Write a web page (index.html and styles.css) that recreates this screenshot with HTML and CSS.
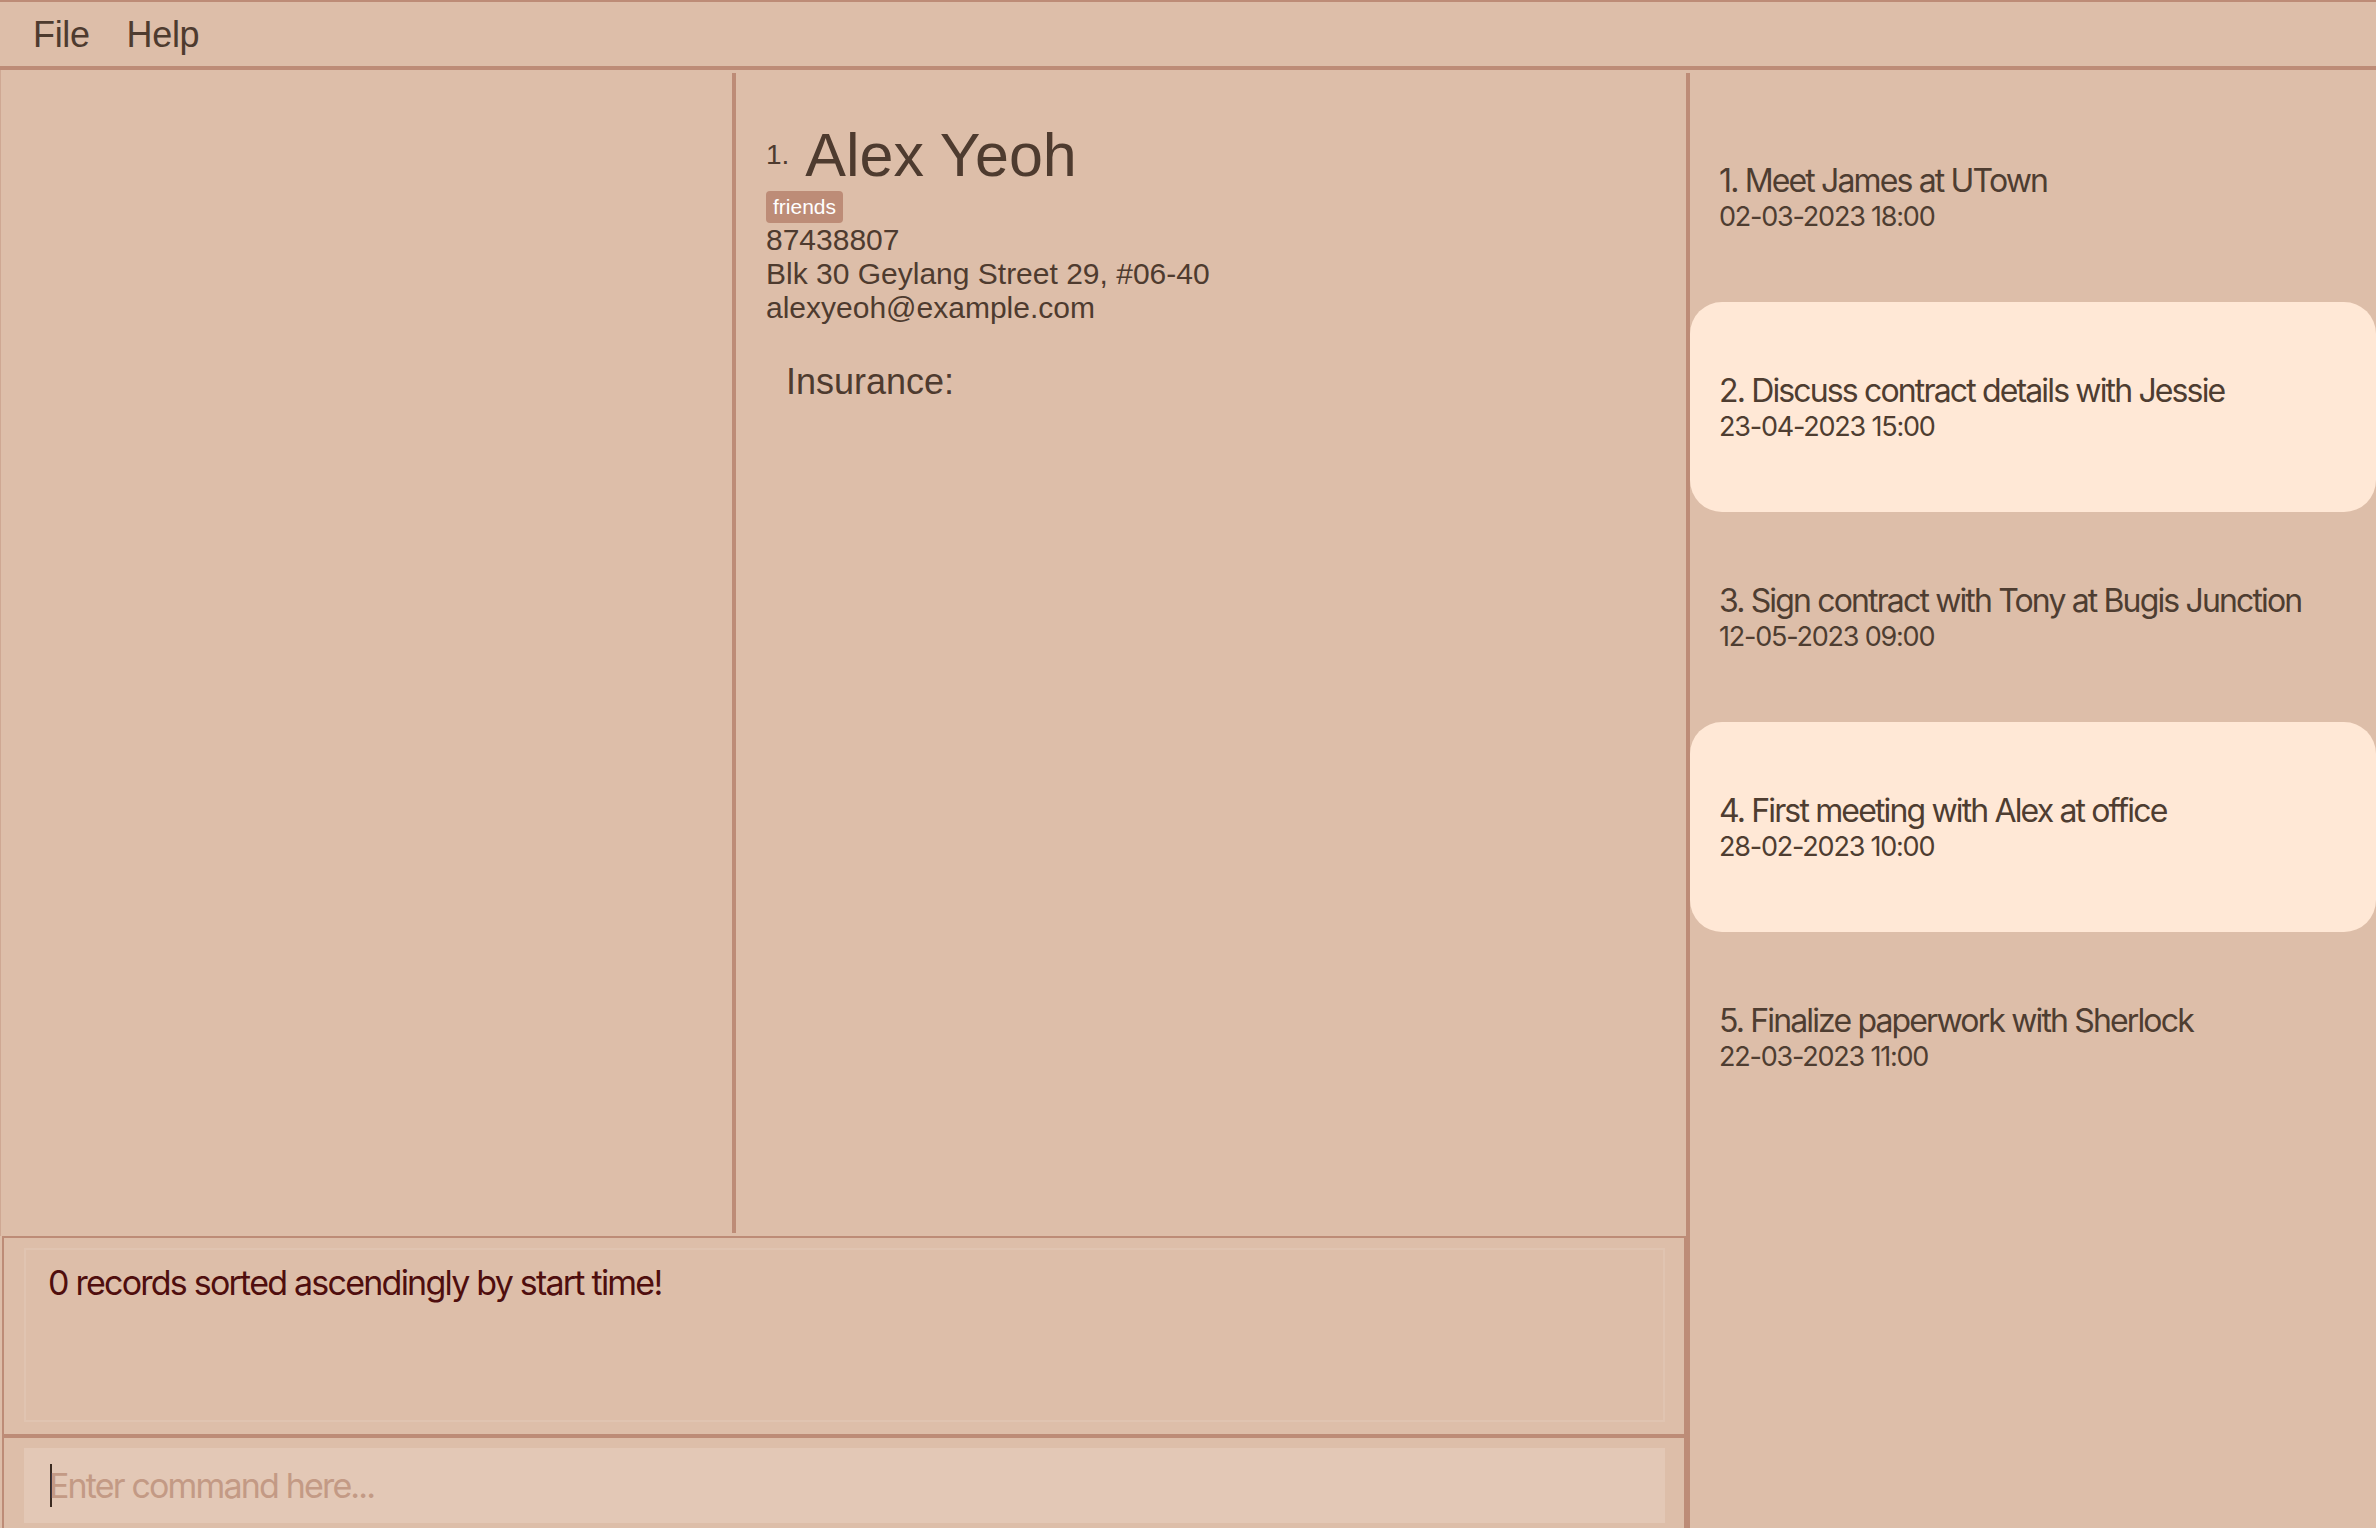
FILE: index.html
```html
<!DOCTYPE html>
<html lang="en">
<head>
<meta charset="utf-8">
<title>Address Book</title>
<link rel="stylesheet" href="styles.css">
</head>
<body>
<div class="app">
  <div class="menubar">
    <span class="menu-item">File</span>
    <span class="menu-item">Help</span>
  </div>
  <div class="workspace">
    <div class="main-col">
      <div class="top-area">
        <div class="list-panel"></div>
        <div class="vdivider short"></div>
        <div class="detail-panel">
          <div class="name-row"><span class="index">1.</span><span class="name">Alex Yeoh</span></div>
          <div class="tags"><span class="tag">friends</span></div>
          <div class="field">87438807</div>
          <div class="field">Blk 30 Geylang Street 29, #06-40</div>
          <div class="field">alexyeoh@example.com</div>
          <div class="insurance">Insurance:</div>
        </div>
      </div>
      <div class="bottom-area">
        <div class="result-display">
          <div class="result-inner">0 records sorted ascendingly by start time!</div>
        </div>
        <div class="command-box">
          <div class="command-input"><span class="caret"></span><span class="placeholder">Enter command here...</span></div>
        </div>
      </div>
    </div>
    <div class="vdivider tall"></div>
    <div class="event-panel">
      <div class="event-card">
        <div class="event-title">1. Meet James at UTown</div>
        <div class="event-date">02-03-2023 18:00</div>
      </div>
      <div class="event-card alt">
        <div class="event-title">2. Discuss contract details with Jessie</div>
        <div class="event-date">23-04-2023 15:00</div>
      </div>
      <div class="event-card">
        <div class="event-title">3. Sign contract with Tony at Bugis Junction</div>
        <div class="event-date">12-05-2023 09:00</div>
      </div>
      <div class="event-card alt">
        <div class="event-title">4. First meeting with Alex at office</div>
        <div class="event-date">28-02-2023 10:00</div>
      </div>
      <div class="event-card">
        <div class="event-title">5. Finalize paperwork with Sherlock</div>
        <div class="event-date">22-03-2023 11:00</div>
      </div>
    </div>
  </div>
</div>
</body>
</html>
```
FILE: styles.css
```css
* { box-sizing: border-box; }
html, body {
  margin: 0;
  padding: 0;
}
body {
  width: 2376px;
  height: 1528px;
  overflow: hidden;
  background: #ddbea9;
  color: #4e3b2f;
  font-family: "Liberation Sans", Arial, sans-serif;
}
.app {
  display: flex;
  flex-direction: column;
  height: 1528px;
}
.menubar {
  flex: none;
  height: 70px;
  border-top: 2px solid #bd8c77;
  border-bottom: 4px solid #bd8c77;
  display: flex;
  align-items: center;
  padding: 1px 0 0 33px;
  gap: 37px;
  font-size: 36px;
  letter-spacing: -0.01em;
  color: #4e3b2f;
}
.workspace {
  flex: 1;
  display: flex;
  min-height: 0;
}
.main-col {
  width: 1686px;
  flex: none;
  display: flex;
  flex-direction: column;
}
.top-area {
  height: 1166px;
  flex: none;
  display: flex;
}
.list-panel {
  width: 732px;
  flex: none;
  border-left: 1px solid #cfa893;
}
.vdivider {
  width: 4px;
  flex: none;
  background: #bd8c77;
}
.vdivider.short { margin: 3px 0; }
.vdivider.tall { margin-top: 3px; }
.detail-panel {
  flex: 1;
  padding: 50px 0 0 30px;
}
.name-row {
  display: flex;
  align-items: center;
  height: 70px;
}
.index {
  font-size: 28px;
  margin-right: 16px;
}
.name {
  font-size: 61px;
  line-height: 70px;
}
.tags {
  display: flex;
  margin-top: 1px;
}
.tag {
  background: #bd8c77;
  color: #fff;
  font-size: 21px;
  line-height: 24px;
  padding: 4px 7px;
  border-radius: 4px;
}
.field {
  font-size: 30px;
  line-height: 34px;
}
.field:first-of-type { margin-top: 1px; }
.insurance {
  font-size: 36px;
  margin: 36px 0 0 20px;
}
.bottom-area {
  flex: 1;
  margin-left: 2px;
  border: 2px solid #bd8c77;
  border-bottom: none;
  display: flex;
  flex-direction: column;
}
.result-display {
  height: 196px;
  flex: none;
  padding: 10px 19px 12px 20px;
}
.result-inner {
  height: 174px;
  border: 2px solid #e0c4b1;
  padding: 12px 22px;
  font-family: Inter, "Liberation Sans", sans-serif;
  font-size: 34px;
  letter-spacing: -0.052em;
  color: #4f0e0e;
}
.command-box {
  flex: 1;
  border-top: 4px solid #bd8c77;
  padding: 10px 19px 0 20px;
}
.command-input {
  height: 75px;
  background: #e3c8b6;
  display: flex;
  align-items: center;
  padding-left: 26px;
  font-family: Inter, "Liberation Sans", sans-serif;
  font-size: 34px;
  letter-spacing: -0.054em;
  color: #c39a85;
}
.caret {
  width: 2px;
  height: 43px;
  background: #3a2a20;
  margin-right: -3px;
  flex: none;
}
.event-panel {
  flex: 1;
  padding-top: 22px;
  display: flex;
  flex-direction: column;
  font-family: Inter, "Liberation Sans", sans-serif;
  color: #4e3d31;
}
.event-card {
  flex: none;
  height: 210px;
  border-radius: 32px;
  padding: 2px 0 0 29px;
  display: flex;
  flex-direction: column;
  justify-content: center;
}
.event-card.alt { background: #ffe8d6; }
.event-title {
  font-size: 32px;
  line-height: 36px;
  letter-spacing: -0.058em;
}
.event-date {
  font-size: 27px;
  line-height: 34px;
  letter-spacing: -0.045em;
  padding-top: 1px;
}
```
